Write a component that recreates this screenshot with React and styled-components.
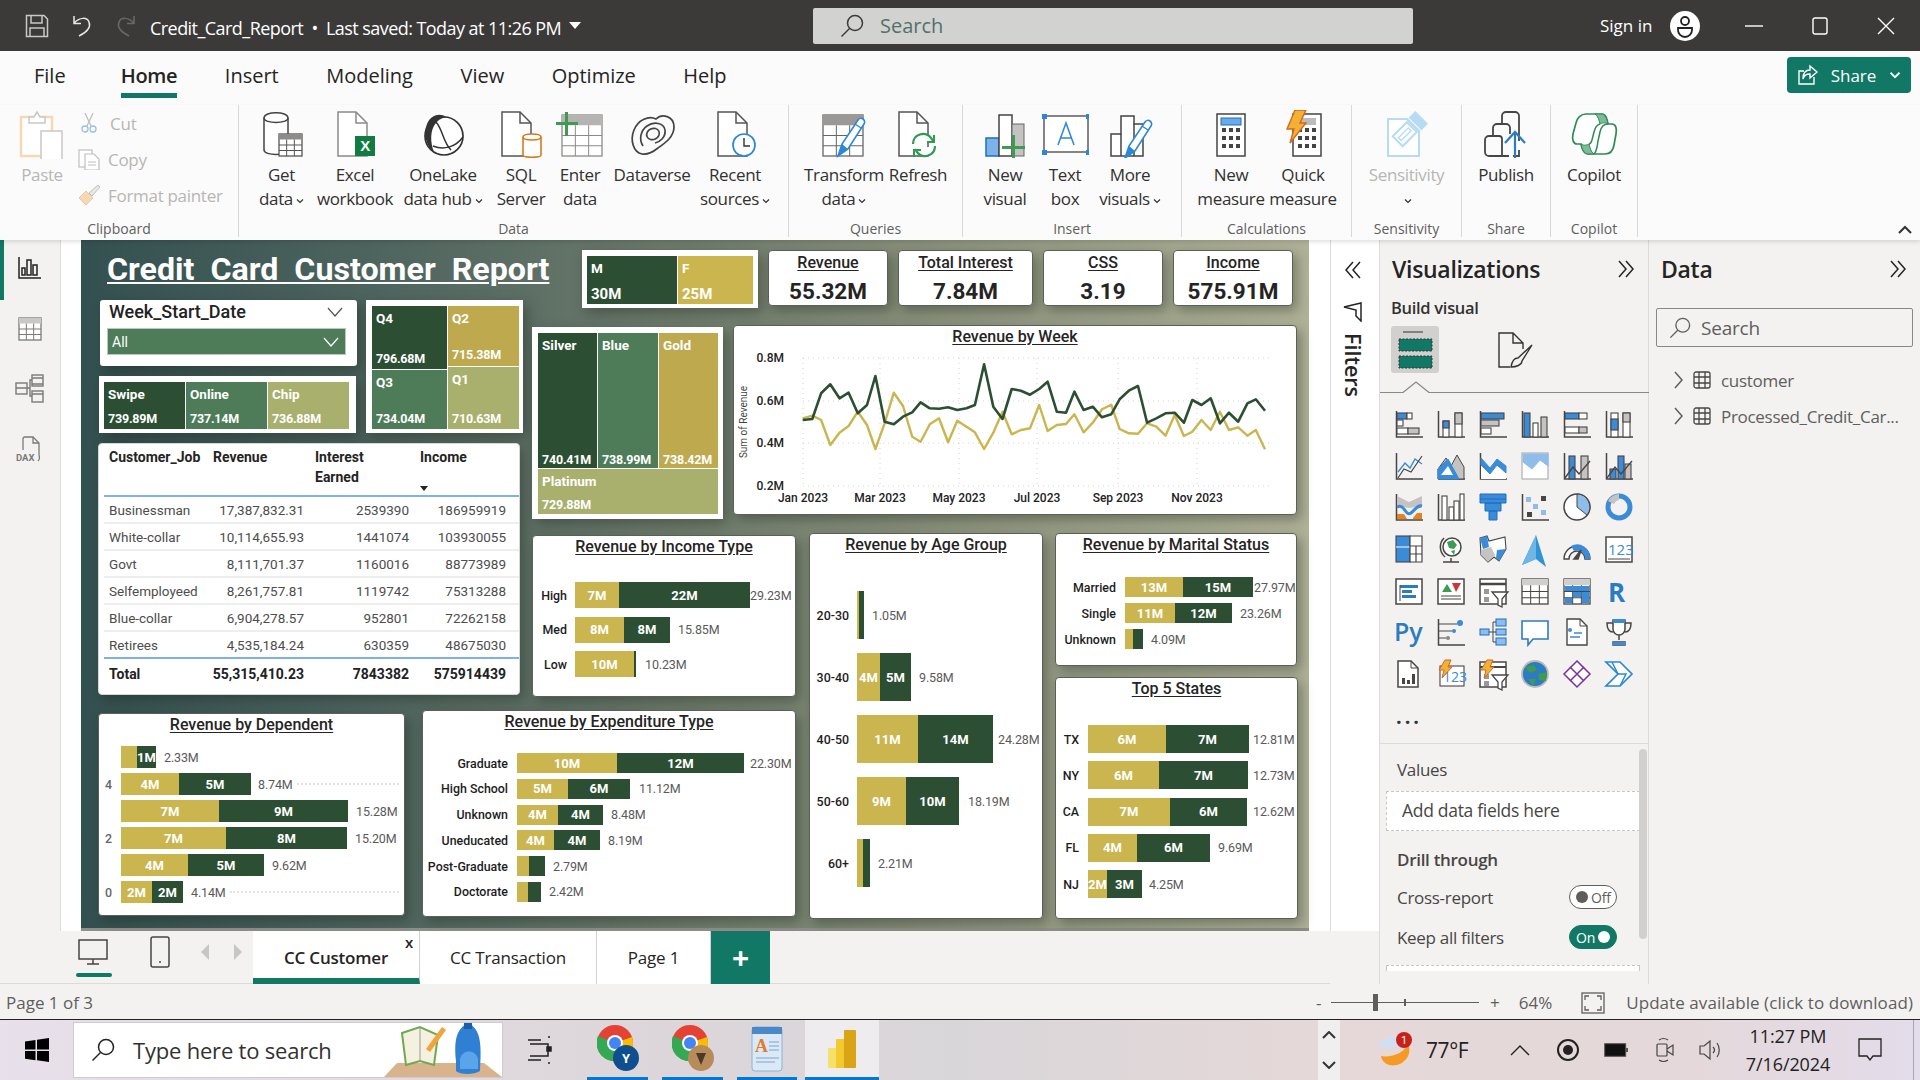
import React from 'react';
import styled, { createGlobalStyle } from 'styled-components';

const GOLD = '#cbb54f';
const DARK = '#2c4f34';
const MID = '#4e7c59';
const KHAKI = '#a9b06e';
const TEAL = '#117865';
const INK = '#484644';
const BLUE = '#3a8bd8';
const SKY = '#8ebdeb';
const GREY = '#c4c3c1';

const GlobalStyle = createGlobalStyle`
  html, body {
    margin: 0;
    width: 1920px;
    height: 1080px;
    overflow: hidden;
    font-family: 'Open Sans', 'Noto Sans', sans-serif;
    color: #252423;
  }
  * { box-sizing: border-box; }
`;

const Page = styled.div`
  width: 1920px;
  height: 1080px;
  display: flex;
  flex-direction: column;
  background: #f3f2f1;
`;

/* title bar */
const TitleBar = styled.div`
  height: 51px;
  flex: none;
  background: #3b3a39;
  display: flex;
  align-items: center;
  color: #fff;
  padding-left: 25px;
`;
const BarIcons = styled.div`
  display: flex;
  align-items: center;
  gap: 22px;
  width: 125px;
`;
const DocTitle = styled.div`
  font-size: 18px;
  width: 419px;
  padding-top: 5px;
  white-space: pre;
  letter-spacing: -0.55px;
`;
const Caret = styled.span`
  width: 0;
  height: 0;
  border-left: 6px solid transparent;
  border-right: 6px solid transparent;
  border-top: 7px solid #fff;
  margin-right: 232px;
`;
const TopSearch = styled.div`
  width: 600px;
  height: 36px;
  background: #d2d2d0;
  border-radius: 2px;
  display: flex;
  align-items: center;
  gap: 16px;
  padding-left: 27px;
  color: #55706a;
  font-size: 20px;
`;
const SignIn = styled.div`
  margin-left: 187px;
  font-size: 17px;
  width: 70px;
`;
const WinControls = styled.div`
  display: flex;
  align-items: center;
  gap: 49px;
  margin-left: 45px;
`;

/* menu */
const MenuBar = styled.div`
  height: 54px;
  flex: none;
  background: #fbfbfb;
  display: flex;
  align-items: flex-start;
  padding: 0 9px 0 34px;
  gap: 47.5px;
`;
const MenuItem = styled.div`
  height: 47px;
  line-height: 49px;
  font-size: 20px;
  font-weight: ${(p) => (p.$on ? 600 : 400)};
  letter-spacing: ${(p) => (p.$on ? -0.3 : 0)}px;
  border-bottom: ${(p) => (p.$on ? `5px solid ${TEAL}` : 'none')};
  margin-right: ${(p) => p.$mr || 0}px;
`;
const ShareButton = styled.div`
  margin-left: auto;
  margin-top: 6px;
  width: 124px;
  height: 36px;
  background: ${TEAL};
  color: #fff;
  border-radius: 4px;
  display: flex;
  align-items: center;
  justify-content: center;
  gap: 10px;
  font-size: 17px;
`;

/* ribbon */
const Ribbon = styled.div`
  height: 135px;
  flex: none;
  background: #fbfbfb;
  display: flex;
  position: relative;
  box-shadow: 0 2px 4px rgba(0, 0, 0, 0.12);
  z-index: 2;
`;
const RibbonGroup = styled.div`
  width: ${(p) => p.$w}px;
  height: 132px;
  border-right: 1px solid #d9d8d6;
  display: flex;
  flex-direction: column;
`;
const GroupBody = styled.div`
  height: 117px;
  display: flex;
  padding-left: ${(p) => p.$pl || 0}px;
`;
const GroupName = styled.div`
  text-align: center;
  font-size: 14px;
  line-height: 16px;
  color: #605e5c;
`;
const RibbonBtn = styled.div`
  width: ${(p) => p.$w}px;
  flex: none;
  display: flex;
  flex-direction: column;
  align-items: center;
  padding-left: ${(p) => p.$pl || 0}px;
  color: ${(p) => (p.$off ? '#b8b6b4' : '#323130')};
  font-size: 17px;
  letter-spacing: -0.35px;
  line-height: 24px;
  text-align: center;
  white-space: nowrap;
`;
const BtnIcon = styled.div`
  height: 59px;
  margin-top: -1px;
  display: flex;
  align-items: center;
  justify-content: center;
`;
const SmallCol = styled.div`
  display: flex;
  flex-direction: column;
`;
const SmallBtn = styled.div`
  height: 36px;
  display: flex;
  align-items: center;
  gap: 6px;
  color: #b8b6b4;
  font-size: 17px;
  letter-spacing: -0.3px;
  white-space: nowrap;
`;
const Collapse = styled.div`
  position: absolute;
  right: 8px;
  bottom: 5px;
  line-height: 0;
`;

/* main */
const Main = styled.div`
  flex: 1;
  display: flex;
  min-height: 0;
`;
const Workspace = styled.div`
  width: 1330px;
  flex: none;
  display: flex;
  flex-direction: column;
`;
const CanvasRow = styled.div`
  height: 691px;
  display: flex;
  background: #fff;
`;
const Rail = styled.div`
  width: 61px;
  flex: none;
  background: #f3f2f1;
  border-right: 1px solid #dddbd9;
  display: flex;
  flex-direction: column;
  align-items: center;
  position: relative;
`;
const RailSlot = styled.div`
  height: 60.5px;
  flex: none;
  display: flex;
  align-items: center;
  justify-content: center;
  padding-bottom: 4px;
`;
const RailMark = styled.div`
  position: absolute;
  left: 0;
  top: 0;
  width: 4px;
  height: 60px;
  background: ${TEAL};
`;
const Canvas = styled.div`
  margin-left: 20px;
  width: 1228px;
  height: 691px;
  padding-left: 17px;
  border-bottom: 3px solid #8e8f8a;
  background: linear-gradient(90deg, #335050 0%, #4f655f 25%, #6f7c6c 50%, #8a917b 70%, #b0b297 100%);
  display: grid;
  grid-template-columns: 430px 274px 498px;
  grid-template-rows: 288px 175px 225px;
  grid-template-areas:
    'head top top'
    'head inc side'
    'low low side';
`;
const HeadArea = styled.div`
  grid-area: head;
  display: flex;
  flex-direction: column;
`;
const TopArea = styled.div`
  grid-area: top;
  display: flex;
  flex-direction: column;
  padding-top: 10px;
`;
const IncomeArea = styled.div`
  grid-area: inc;
  padding: 7px 0 0 4px;
`;
const LowArea = styled.div`
  grid-area: low;
  display: flex;
  align-items: flex-start;
  gap: 17px;
`;
const SideArea = styled.div`
  grid-area: side;
  display: flex;
  align-items: flex-start;
  gap: 12px;
  padding-left: 7px;
`;
const SideCol = styled.div`
  display: flex;
  flex-direction: column;
  gap: 11px;
  padding-top: 5px;
`;

const ReportTitle = styled.div`
  height: 60px;
  padding: 11px 0 0 9px;
  font-family: Roboto, 'Liberation Sans', sans-serif;
  font-size: 32.2px;
  line-height: 36px;
  font-weight: 700;
  color: #fff;
  white-space: pre;
  text-decoration: underline;
  text-decoration-thickness: 2px;
  text-underline-offset: 2px;
`;
const FiltersRow = styled.div`
  display: flex;
  gap: 9px;
`;
const FiltersCol = styled.div`
  display: flex;
  flex-direction: column;
  gap: 10px;
`;
const Panel = styled.div`
  font-family: Roboto, 'Liberation Sans', sans-serif;
  background: #fff;
  width: ${(p) => p.$w}px;
  height: ${(p) => p.$h}px;
  margin-left: ${(p) => p.$ml || 0}px;
  margin-top: ${(p) => p.$mt || 0}px;
  flex: none;
  box-shadow: 4px 5px 12px rgba(20, 30, 20, 0.35);
`;
const Card = styled(Panel)`
  border: 1px solid #5a5f58;
  border-radius: 4px;
`;
const FramePanel = styled(Panel)`
  padding: ${(p) => p.$pad || '6px'};
  display: flex;
  gap: 1px;
`;
const Slicer = styled(Panel)`
  border-radius: 3px;
  padding: 0 11px 0 7px;
`;
const SlicerHead = styled.div`
  height: 28px;
  display: flex;
  align-items: center;
  justify-content: space-between;
  padding: 0 3px 5px 2px;
  font-size: 18px;
  font-weight: 500;
  color: #222;
`;
const SlicerDrop = styled.div`
  height: 27px;
  background: ${MID};
  border: 1px solid #b9c9bd;
  color: #fff;
  font-size: 14px;
  display: flex;
  align-items: center;
  justify-content: space-between;
  padding: 0 6px 0 4px;
`;
const TileCol = styled.div`
  display: flex;
  flex-direction: column;
  gap: 1px;
`;
const TileLine = styled.div`
  display: flex;
  gap: 1px;
`;
const Tile = styled.div`
  width: ${(p) => p.$w}px;
  height: ${(p) => p.$h}px;
  background: ${(p) => p.$c};
  color: #fff;
  display: flex;
  flex-direction: column;
  justify-content: space-between;
  padding: 4px 4px ${(p) => p.$pb ?? 2}px;
  font-size: 13.5px;
  font-weight: 700;
  line-height: 16px;
  white-space: nowrap;
`;
const TileValue = styled.div`
  font-size: 12.5px;
  font-weight: 700;
  letter-spacing: -0.2px;
`;
const LargeValue = styled.div`
  font-size: 15px;
  font-weight: 700;
`;

/* table */
const Table = styled(Card)`
  margin-top: 10px;
  padding: 0 0 0 5px;
  border-color: #d7d7d7;
`;
const TableGrid = styled.div`
  display: grid;
  grid-template-columns: 105px 100px 105px 97px;
  height: ${(p) => p.$h}px;
  align-items: ${(p) => (p.$head ? 'start' : 'center')};
  border-bottom: ${(p) => p.$line || 'none'};
  font-size: ${(p) => (p.$strong ? '14px' : '13.5px')};
  font-weight: ${(p) => (p.$strong ? 700 : 400)};
  color: ${(p) => (p.$strong ? '#222' : '#4d4d4d')};
`;
const HeadCell = styled.div`
  position: relative;
  font-weight: 700;
  color: #252423;
  font-size: 14px;
  line-height: 20px;
  padding: 3px 0 0 ${(p) => p.$pl}px;
  white-space: nowrap;
`;
const SortMark = styled.span`
  position: absolute;
  left: 6px;
  top: 42px;
  width: 0;
  height: 0;
  border-left: 4px solid transparent;
  border-right: 4px solid transparent;
  border-top: 5px solid #252423;
`;
const NameCell = styled.div`
  padding-left: 5px;
  white-space: nowrap;
`;
const NumCell = styled.div`
  text-align: right;
  padding-right: 5px;
  white-space: nowrap;
`;

/* KPI */
const KpiRow = styled.div`
  display: flex;
  gap: 10px;
  padding-left: 54px;
`;
const Kpi = styled(Card)`
  text-align: center;
  color: #252423;
`;
const KpiName = styled.div`
  font-size: 16px;
  line-height: 20px;
  margin-top: 2px;
  font-weight: 500;
  text-decoration: underline;
  text-underline-offset: 2px;
`;
const KpiValue = styled.div`
  font-size: 22.5px;
  line-height: 30px;
  margin-top: 3px;
  font-weight: 700;
`;
const ChartsRow = styled.div`
  display: flex;
  gap: 10px;
  padding-left: 4px;
  margin-top: 17px;
  align-items: flex-start;
`;

/* bar charts */
const ChartTitle = styled.div`
  height: 22px;
  line-height: 22px;
  text-align: center;
  font-size: 16px;
  font-weight: 500;
  color: #252423;
  text-decoration: underline;
  text-underline-offset: 2px;
  white-space: nowrap;
`;
const BarList = styled.div`
  margin-top: ${(p) => p.$top}px;
  display: flex;
  flex-direction: column;
  gap: ${(p) => p.$gap}px;
`;
const BarRow = styled.div`
  display: flex;
  align-items: center;
  height: ${(p) => p.$h}px;
`;
const BarCat = styled.div`
  flex: none;
  width: ${(p) => p.$w}px;
  padding-right: ${(p) => p.$pad}px;
  text-align: right;
  font-size: 12.4px;
  font-weight: 500;
  color: ${(p) => (p.$soft ? '#666' : '#1d1d1d')};
  white-space: nowrap;
`;
const Seg = styled.div`
  flex: none;
  height: 100%;
  background: ${(p) => p.$c};
  color: #fff;
  font-size: 13px;
  font-weight: 700;
  display: flex;
  align-items: center;
  justify-content: center;
  overflow: hidden;
`;
const BarTotal = styled.div`
  flex: none;
  font-size: 12.5px;
  letter-spacing: -0.15px;
  color: #5a5a5a;
  white-space: nowrap;
`;
const BarDots = styled.div`
  flex: 1;
  margin: 0 5px 0 4px;
  border-top: 2px dotted #e2e2e2;
`;

/* filters pane */
const FilterPane = styled.div`
  width: 49px;
  flex: none;
  height: 691px;
  background: #fff;
  border-left: 1px solid #dcdbd9;
  display: flex;
  flex-direction: column;
  align-items: center;
  padding: 20px 4px 0 0;
`;
const FilterLabel = styled.div`
  writing-mode: vertical-rl;
  font-size: 21.5px;
  line-height: 24px;
  font-weight: 600;
  margin-top: 11px;
  color: #252423;
`;

/* tabs */
const TabBar = styled.div`
  height: 53px;
  display: flex;
  border-bottom: 1px solid #dcdbd9;
  background: #f3f2f1;
`;
const TabTools = styled.div`
  width: 253px;
  flex: none;
  display: flex;
  align-items: flex-start;
  padding: 4px 0 0 60px;
  position: relative;
`;
const ToolMark = styled.div`
  position: absolute;
  left: 76px;
  top: 42px;
  width: 36px;
  height: 4px;
  border-radius: 2px;
  background: ${TEAL};
`;
const ToolSlot = styled.div`
  width: ${(p) => p.$w}px;
  flex: none;
  height: 34px;
  display: flex;
  align-items: center;
  justify-content: center;
`;
const Tab = styled.div`
  width: ${(p) => p.$w}px;
  height: 53px;
  background: #fff;
  border-right: 1px solid #d3d2d0;
  border-bottom: ${(p) => (p.$on ? `6px solid ${TEAL}` : 'none')};
  font-size: 17px;
  letter-spacing: -0.2px;
  font-weight: ${(p) => (p.$on ? 600 : 400)};
  display: flex;
  align-items: center;
  justify-content: center;
  padding-top: ${(p) => (p.$on ? 6 : 0)}px;
  position: relative;
`;
const TabClose = styled.span`
  position: absolute;
  right: 6px;
  top: 0;
  font-size: 15px;
  line-height: 22px;
  font-weight: 600;
`;
const AddTab = styled.div`
  width: 59px;
  height: 53px;
  background: ${TEAL};
  color: #fff;
  font-size: 30px;
  font-weight: 700;
  display: flex;
  align-items: center;
  justify-content: center;
`;

/* visualizations pane */
const VizPane = styled.div`
  width: 270px;
  flex: none;
  border-left: 1px solid #dcdbd9;
  border-right: 1px solid #dcdbd9;
  position: relative;
  background: #f3f2f1;
`;
const PaneHead = styled.div`
  height: 56px;
  padding: 2px 13px 0 12px;
  display: flex;
  align-items: center;
  justify-content: space-between;
  font-size: 23px;
  font-weight: 600;
  letter-spacing: -0.3px;
  color: #252423;
`;
const BuildLabel = styled.div`
  height: 24px;
  line-height: 24px;
  padding-left: 11px;
  font-size: 16.5px;
  font-weight: 600;
  letter-spacing: -0.3px;
  color: #323130;
`;
const BuildTabs = styled.div`
  display: flex;
  padding: 6px 0 0 11px;
  height: 53px;
  gap: 52px;
  align-items: flex-start;
`;
const BuildTile = styled.div`
  width: 48px;
  height: 47px;
  border-radius: 3px;
  background: ${(p) => (p.$on ? '#d2d0ce' : 'transparent')};
  display: flex;
  align-items: center;
  justify-content: center;
`;
const Notch = styled.svg`
  display: block;
  width: 269px;
  height: 20px;
`;
const VizGrid = styled.div`
  display: grid;
  grid-template-columns: repeat(6, 42px);
  grid-auto-rows: 41.7px;
  padding: 11px 0 0 8px;
  height: 350px;
  align-items: center;
  justify-items: center;
`;
const VizDots = styled.div`
  grid-column: 1;
  letter-spacing: 3px;
  font-size: 20px;
  font-weight: 700;
  line-height: 10px;
  color: #333;
`;
const WellArea = styled.div`
  border-top: 1px solid #dcdbd9;
  padding: 14px 0 0 6px;
`;
const WellLabel = styled.div`
  padding-left: 11px;
  font-size: 17px;
  line-height: 24px;
  letter-spacing: -0.3px;
  color: #484644;
  font-weight: ${(p) => (p.$b ? 600 : 400)};
  margin-top: ${(p) => p.$mt || 0}px;
`;
const DropWell = styled.div`
  margin-top: ${(p) => p.$mt || 9}px;
  width: 254px;
  height: ${(p) => p.$h || 40}px;
  background: #fff;
  border: 1px dashed #c8c6c4;
  border-bottom: ${(p) => (p.$cut ? 'none' : '1px dashed #c8c6c4')};
  padding-left: 15px;
  line-height: 36px;
  font-size: 17.5px;
  letter-spacing: -0.3px;
  color: #484644;
`;
const ToggleRow = styled.div`
  width: 231px;
  margin-top: ${(p) => p.$mt}px;
  padding-left: 11px;
  display: flex;
  align-items: center;
  justify-content: space-between;
  font-size: 17px;
  letter-spacing: -0.3px;
  color: #484644;
`;
const Toggle = styled.div`
  width: 48px;
  height: 24px;
  border-radius: 12px;
  display: flex;
  align-items: center;
  gap: 3px;
  padding: 0 6px;
  background: ${(p) => (p.$on ? TEAL : '#fff')};
  border: 1px solid ${(p) => (p.$on ? TEAL : '#605e5c')};
  color: ${(p) => (p.$on ? '#fff' : '#605e5c')};
  font-size: 14px;
  letter-spacing: -0.2px;
`;
const Knob = styled.span`
  width: 12px;
  height: 12px;
  border-radius: 50%;
  flex: none;
  background: ${(p) => (p.$on ? '#fff' : '#605e5c')};
`;
const ScrollThumb = styled.div`
  position: absolute;
  right: 1px;
  top: 509px;
  width: 8px;
  height: 190px;
  border-radius: 4px;
  background: #d2d0ce;
`;

/* data pane */
const DataPane = styled.div`
  flex: 1;
  background: #f3f2f1;
`;
const DataSearch = styled.div`
  margin: 12px 0 0 7px;
  width: 257px;
  height: 39px;
  border: 1px solid #8a8886;
  border-radius: 2px;
  display: flex;
  align-items: center;
  gap: 10px;
  padding-left: 12px;
  font-size: 19px;
  letter-spacing: -0.2px;
  color: #605e5c;
`;
const FieldList = styled.div`
  margin-top: 15px;
`;
const FieldRow = styled.div`
  height: 36px;
  display: flex;
  align-items: center;
  padding-left: 24px;
  gap: 10px;
  font-size: 17px;
  letter-spacing: -0.3px;
  color: #605e5c;
  white-space: nowrap;
`;

/* status + taskbar */
const StatusBar = styled.div`
  height: 36px;
  flex: none;
  display: flex;
  align-items: center;
  padding: 2px 0 0 6px;
  background: #f3f2f1;
  border-bottom: 1px solid #222;
  font-size: 17px;
  color: #605e5c;
`;
const ZoomGroup = styled.div`
  margin-left: auto;
  display: flex;
  align-items: center;
`;
const ZoomTrack = styled.div`
  position: relative;
  width: 148px;
  height: 1px;
  background: #605e5c;
  margin: 0 11px 0 9.5px;
`;
const ZoomThumb = styled.div`
  position: absolute;
  left: ${(p) => p.$x}px;
  top: ${(p) => (p.$tall ? -8 : -3)}px;
  width: ${(p) => (p.$tall ? 5 : 2)}px;
  height: ${(p) => (p.$tall ? 17 : 7)}px;
  background: #605e5c;
`;
const PercentText = styled.span`
  margin-left: 19px;
`;
const FitIcon = styled.svg`
  margin-left: 29px;
`;
const UpdateText = styled.div`
  margin: 0 7px 0 21px;
  letter-spacing: 0.07px;
`;
const Taskbar = styled.div`
  height: 60px;
  flex: none;
  display: flex;
  align-items: center;
  background: linear-gradient(90deg, #e8e0ea 0%, #dcd6da 35%, #d9d6d9 50%, #e6d8d8 70%, #e4d8da 88%, #e3dcea 100%);
`;
const StartSlot = styled.div`
  width: 73px;
  flex: none;
  display: flex;
  justify-content: center;
`;
const TaskSearch = styled.div`
  width: 430px;
  flex: none;
  height: 56px;
  background: #fff;
  display: flex;
  align-items: center;
  gap: 18px;
  padding-left: 17px;
  font-size: 22px;
  letter-spacing: -0.2px;
  color: #323130;
  border: 1px solid #cfcccf;
  position: relative;
  overflow: hidden;
`;
const SearchArt = styled.div`
  position: absolute;
  right: 0;
  bottom: 0;
  line-height: 0;
`;
const TaskIcons = styled.div`
  display: flex;
  flex: none;
  margin-left: 7px;
  height: 60px;
  align-items: stretch;
`;
const TaskSlot = styled.div`
  width: ${(p) => p.$w}px;
  flex: none;
  margin-left: ${(p) => p.$ml || 0}px;
  display: flex;
  align-items: center;
  justify-content: center;
  background: ${(p) => (p.$hot ? 'rgba(255,255,255,0.55)' : 'transparent')};
  border-bottom: ${(p) => (p.$run ? '3px solid #0078d4' : 'none')};
`;
const TrayScroll = styled.div`
  margin-left: 439px;
  width: 22px;
  flex: none;
  height: 60px;
  background: #f0eeee;
  display: flex;
  flex-direction: column;
  align-items: center;
  justify-content: space-between;
  padding: 11px 0;
`;
const Tray = styled.div`
  display: flex;
  flex: none;
  align-items: center;
  height: 60px;
  padding-left: 38px;
  color: #222;
`;
const Temp = styled.div`
  font-size: 21px;
  margin-left: 12px;
  width: 79px;
  letter-spacing: -0.4px;
`;
const TrayIcon = styled.div`
  width: ${(p) => p.$w}px;
  flex: none;
  display: flex;
  justify-content: center;
`;
const ClockBox = styled.div`
  width: 120px;
  flex: none;
  margin-left: 5px;
  text-align: center;
  font-size: 18px;
  line-height: 28px;
  letter-spacing: -0.1px;
`;
const TrayEnd = styled.div`
  width: 1px;
  flex: none;
  height: 60px;
  margin-left: 21px;
  background: #a9a6ad;
`;

/* ---------- drawn icons ---------- */

const Ic = ({ s = 48, w, h, children }) => (
  <svg width={w || s} height={h || s} viewBox={`0 0 ${w || s} ${h || s}`} fill="none">
    {children}
  </svg>
);

const Doc = ({ c = '#4a4a48', x = 0, w = 30, h = 44, y = 2 }) => (
  <>
    <path d={`M${x + 1} ${y}H${x + w - 11}L${x + w} ${y + 11}V${y + h}H${x + 1}Z`} fill="#fff" stroke={c} strokeWidth="1.5" />
    <path d={`M${x + w - 11} ${y}V${y + 11}H${x + w}`} stroke={c} strokeWidth="1.5" />
  </>
);

const GridTable = ({ x, y, w, h, rows = 3, cols = 3, c = '#6a6a68', head = '#a8a7a5' }) => (
  <>
    <rect x={x} y={y} width={w} height={h} fill="#fff" stroke={c} strokeWidth="1.3" />
    <rect x={x} y={y} width={w} height={h / (rows + 1)} fill={head} />
    {Array.from({ length: rows - 1 }, (_, i) => (
      <path key={i} d={`M${x} ${y + ((i + 2) * h) / (rows + 1)}H${x + w}`} stroke={c} />
    ))}
    {Array.from({ length: cols - 1 }, (_, i) => (
      <path key={i} d={`M${x + ((i + 1) * w) / cols} ${y + h / (rows + 1)}V${y + h}`} stroke={c} />
    ))}
  </>
);

const Pencil = ({ x = 0, y = 0 }) => (
  <g transform={`translate(${x} ${y})`}>
    <path d="M2 40L6 28 22 4a3 3 0 0 1 6 4L12 33Z" fill="#fff" stroke="#2b88d8" strokeWidth="1.6" />
    <path d="M2 40L6 28 12 33Z" fill="#2b88d8" />
    <path d="M19 8l6 4" stroke="#2b88d8" strokeWidth="1.4" />
  </g>
);

const Chevron = ({ c = '#323130', s = 8 }) => (
  <svg width={s} height={s} viewBox="0 0 8 8" fill="none" style={{ marginLeft: 3 }}>
    <path d="M1 2.5L4 5.5 7 2.5" stroke={c} strokeWidth="1.2" />
  </svg>
);

const GetDataIcon = () => (
  <Ic>
    <path d="M6 8c0-7 24-7 24 0v32c0 6-24 6-24 0Z" fill="#fff" stroke="#444" strokeWidth="1.5" />
    <path d="M6 8c0 6 24 6 24 0" stroke="#444" strokeWidth="1.5" />
    <GridTable x={21} y={24} w={23} h={22} c="#555" head="#8d8c8a" />
  </Ic>
);
const ExcelIcon = () => (
  <Ic>
    <Doc c="#8a8a88" x={6} />
    <rect x="24" y="26" width="20" height="20" fill="#107c41" />
    <text x="34" y="41" fill="#fff" fontSize="15" fontWeight="700" textAnchor="middle" fontFamily="Liberation Sans">X</text>
  </Ic>
);
const OneLakeIcon = () => (
  <Ic>
    <circle cx="25" cy="26" r="19" fill="#fff" stroke="#333" strokeWidth="1.7" />
    <path d="M27 7C22 3 12 4 8 14 4 24 7 36 15 42 11 32 11 20 17 13 20 9 24 8 27 7Z" fill="#333" />
    <path d="M17 12C24 20 24 32 32 40M14 36C24 40 36 38 44 27" stroke="#333" strokeWidth="1.5" />
  </Ic>
);
const SqlIcon = () => (
  <Ic>
    <Doc c="#555" x={4} />
    <path d="M26 27c0-4 18-4 18 0v18c0 3-18 3-18 0Z" fill="#fff" stroke="#d97a1f" strokeWidth="1.6" />
    <path d="M26 27c0 4 18 4 18 0" stroke="#d97a1f" strokeWidth="1.6" />
  </Ic>
);
const EnterIcon = () => (
  <Ic>
    <GridTable x={6} y={5} w={40} h={41} head="#b5b4b2" c="#8a8a88" />
    <rect x="0" y="12" width="22" height="3" fill="#3f9a54" />
    <rect x="9" y="2" width="3" height="24" fill="#3f9a54" />
  </Ic>
);
const DataverseIcon = () => (
  <Ic>
    <path d="M14 44C5 42 2 30 6 20 10 10 21 5 28 9 34 3 46 6 46 17 46 27 37 33 30 38 25 42 20 45 14 44Z" stroke="#444" strokeWidth="1.7" />
    <path d="M15 36C11 30 12 21 19 16 26 11 36 13 37 20 38 27 32 32 27 33" stroke="#444" strokeWidth="1.7" />
    <ellipse cx="25" cy="24" rx="6.5" ry="5.5" transform="rotate(-25 25 24)" stroke="#444" strokeWidth="1.7" />
  </Ic>
);
const RecentIcon = () => (
  <Ic>
    <Doc c="#555" x={6} />
    <circle cx="33" cy="35" r="11" fill="#fff" stroke="#2b88d8" strokeWidth="1.7" />
    <path d="M33 28v8h6" stroke="#333" strokeWidth="1.4" />
  </Ic>
);
const TransformIcon = () => (
  <Ic>
    <GridTable x={3} y={5} w={40} h={41} c="#666" head="#9a9998" />
    <Pencil x={16} y={6} />
  </Ic>
);
const RefreshIcon = () => (
  <Ic>
    <Doc c="#555" x={4} />
    <path d="M19 34a10 10 0 0 1 18-6l2 3M41 36a10 10 0 0 1-18 6l-2-3" stroke="#2e9b53" strokeWidth="2.2" fill="#fff" />
    <path d="M40 25v7h-7M20 47v-7h7" stroke="#2e9b53" strokeWidth="2" />
  </Ic>
);
const NewVisualIcon = () => (
  <Ic>
    <rect x="5" y="28" width="13" height="18" fill="#7cb3e8" stroke="#1f6fc0" strokeWidth="1.5" />
    <rect x="18" y="5" width="13" height="41" fill="#fff" stroke="#444" strokeWidth="1.5" />
    <rect x="31" y="14" width="12" height="32" fill="#c4c3c1" stroke="#666" />
    <rect x="21" y="36" width="23" height="3" fill="#3f9a54" />
    <rect x="31" y="25" width="3" height="23" fill="#3f9a54" />
  </Ic>
);
const TextBoxIcon = () => (
  <Ic>
    <rect x="3" y="6" width="44" height="36" fill="#fff" stroke="#444" strokeWidth="1.3" />
    {[[1, 4], [45, 4], [1, 40], [45, 40]].map(([x, y]) => (
      <rect key={x + '-' + y} x={x} y={y} width="5" height="5" fill="#2b88d8" />
    ))}
    <path d="M17 35L25 13 33 35M20 28H30" stroke="#2b88d8" strokeWidth="1.5" />
  </Ic>
);
const MoreVisualsIcon = () => (
  <Ic>
    <path d="M5 46V24H15V6H28V14H37V46Z" fill="#fff" stroke="#444" strokeWidth="1.5" />
    <path d="M15 24V46M28 14V46" stroke="#444" strokeWidth="1.5" />
    <Pencil x={17} y={8} />
  </Ic>
);
const Calc = ({ x = 8 }) => (
  <>
    <rect x={x} y="4" width="28" height="42" fill="#fff" stroke="#444" strokeWidth="1.5" />
    {[18, 26, 34].map((y) =>
      [x + 5, x + 12, x + 19].map((cx) => <rect key={`${y}-${cx}`} x={cx} y={y} width="4" height="4" fill="#444" />)
    )}
  </>
);
const NewMeasureIcon = () => (
  <Ic>
    <Calc x={10} />
    <rect x="14" y="8" width="20" height="7" fill="#6aaae6" stroke="#1f6fc0" />
  </Ic>
);
const QuickMeasureIcon = () => (
  <Ic>
    <Calc x={14} />
    <rect x="20" y="8" width="17" height="7" fill="#bdbcba" />
    <path d="M16 0H27L21 13H27L11 33 15 19H8Z" fill="#f2b035" stroke="#d2691e" strokeWidth="1.4" />
  </Ic>
);
const SensitivityIcon = () => (
  <Ic>
    <rect x="5" y="9" width="31" height="37" fill="#fff" stroke="#b7dcf2" strokeWidth="2" />
    <g transform="rotate(-45 26 20)">
      <rect x="10" y="13" width="20" height="14" fill="#fff" stroke="#b7dcf2" strokeWidth="2" />
      <rect x="13" y="18" width="14" height="4" fill="#fff" stroke="#b7dcf2" strokeWidth="1.4" />
      <rect x="31" y="11" width="13" height="18" fill="#b7dcf2" />
      <path d="M34 11V29" stroke="#fff" />
    </g>
  </Ic>
);
const PublishIcon = () => (
  <Ic>
    <path d="M27 46H7A4 4 0 0 1 3 42V30A4 4 0 0 1 7 26H17A3 3 0 0 1 20 29V46" stroke="#484644" strokeWidth="1.8" />
    <path d="M11 26V18A4 4 0 0 1 15 14H24A4 4 0 0 1 28 18V24" stroke="#484644" strokeWidth="1.8" />
    <path d="M20 14V6A4 4 0 0 1 24 2H33A4 4 0 0 1 37 6V31M37 40V46H31" stroke="#484644" strokeWidth="1.8" />
    <path d="M33 48V22M23 33L33 22 43 33" stroke="#2b7cc0" strokeWidth="2.2" />
  </Ic>
);
const CopilotIcon = () => (
  <Ic>
    <path d="M16 4H32C36 4 37 9 38 14H42C46 14 47 19 46 24L44 35C43 41 40 44 35 44H18C14 44 12 39 11 34H7C3 34 2 29 3 24L6 13C7 8 11 4 16 4Z" fill="#fff" stroke="#2e8b57" strokeWidth="1.7" />
    <path d="M25 4H32C35 4 37 9 38 14 35 12 32 13 30 14 29 10 28 6 25 4Z" fill="#7dbb92" stroke="#2e8b57" />
    <path d="M11 34C14 36 17 35 19 34 20 38 21 42 24 44H18C14 44 12 39 11 34Z" fill="#7dbb92" stroke="#2e8b57" />
    <path d="M30 14C26 15 25 18 24 22L22 30C21 33 20 34 19 34M38 14C34 14 31 17 30 22L28 31C27 37 27 41 24 44" stroke="#2e8b57" strokeWidth="1.5" />
  </Ic>
);
const PasteIcon = () => (
  <Ic s={50}>
    <rect x="4" y="8" width="31" height="39" fill="#fff" stroke="#f6d9b4" strokeWidth="2.5" />
    <path d="M12 8h5l3-5 3 5h5v6H12Z" fill="#fff" stroke="#c9c8c6" strokeWidth="1.5" />
    <rect x="24" y="22" width="21" height="30" fill="#fff" stroke="#c9c8c6" strokeWidth="1.5" />
  </Ic>
);
const CutIcon = () => (
  <Ic s={22}>
    <path d="M7 1L13 14M15 1L9 14" stroke="#c0bfbd" strokeWidth="1.3" />
    <circle cx="7" cy="17" r="3" stroke="#9dbfe0" strokeWidth="1.3" />
    <circle cx="15" cy="17" r="3" stroke="#9dbfe0" strokeWidth="1.3" />
  </Ic>
);
const CopyIcon = () => (
  <Ic s={22} w={24}>
    <rect x="1" y="2" width="13" height="17" fill="#fff" stroke="#c0bfbd" strokeWidth="1.2" />
    <path d="M7 6h9l5 5v11H7Z" fill="#fff" stroke="#c0bfbd" strokeWidth="1.2" />
    <path d="M10 14h8M10 17h8" stroke="#c0bfbd" />
  </Ic>
);
const PainterIcon = () => (
  <Ic s={22} w={24}>
    <path d="M1 14l7-7 7 7-7 7Z" fill="#f6d9b4" stroke="#e8c9a0" />
    <path d="M11 9l9-8 2 2-8 9Z" fill="#e8e8e8" stroke="#c0bfbd" />
  </Ic>
);

const SaveIcon = () => (
  <svg width="24" height="24" viewBox="0 0 24 24" fill="none" stroke="#c8c8c6" strokeWidth="1.5">
    <path d="M1.5 1.5H19L22.5 5V22.5H1.5Z" />
    <path d="M6 1.5V9H17V1.5M5 22.5V14H19V22.5" />
  </svg>
);
const UndoIcon = ({ dim, flip }) => (
  <svg width="22" height="24" viewBox="0 0 22 24" fill="none" stroke={dim ? '#6a6968' : '#e8e8e6'} strokeWidth="1.5" style={{ transform: flip ? 'scaleX(-1)' : 'none' }}>
    <path d="M8 22C16 18 20 13 18 8 16 3 9 3 3 9M3 2V9.5H10" />
  </svg>
);
const Magnifier = ({ s = 24, c = '#3b3a39' }) => (
  <svg width={s} height={s} viewBox="0 0 24 24" fill="none" stroke={c} strokeWidth="1.5">
    <circle cx="15" cy="9" r="7.5" />
    <path d="M9.5 14.5L1.5 22.5" />
  </svg>
);
const Avatar = () => (
  <svg width="30" height="30" viewBox="0 0 30 30" fill="none">
    <circle cx="15" cy="15" r="15" fill="#fff" />
    <circle cx="15" cy="10" r="4" stroke="#222" strokeWidth="1.8" />
    <path d="M8 17H22V19A7 7 0 0 1 8 19Z" stroke="#222" strokeWidth="1.8" />
  </svg>
);
const ShareIcon = () => (
  <svg width="24" height="24" viewBox="0 0 24 24" fill="none" stroke="#fff" strokeWidth="1.4">
    <path d="M17 14V21H2V8H7" />
    <path d="M13 3L20 9 13 15V11C10 11 7 12 6 16 6 10 9 7 13 7Z" />
  </svg>
);

const BarsSide = ({ c }) => (
  <Ic s={26}>
    <path d="M2 2V23H24" stroke={c} strokeWidth="1.5" />
    <path d="M5 20V13H8V20ZM10 20V5H14V20ZM16 20V10H20V20Z" stroke={c} strokeWidth="1.5" />
  </Ic>
);
const RailTable = () => (
  <Ic s={26}>
    <GridTable x={2} y={2} w={22} h={22} rows={3} cols={3} c="#7a7a78" head="#c9c8c6" />
  </Ic>
);
const RailModel = () => (
  <svg width="30" height="30" viewBox="0 0 30 30" fill="none" stroke="#7a7a78" strokeWidth="1.4">
    <rect x="1" y="9" width="11" height="11" />
    <path d="M1 14H12M17 4H28M17 10H28M17 20H28" />
    <rect x="17" y="1" width="11" height="11" />
    <rect x="17" y="17" width="11" height="11" />
    <path d="M12 14H15V6H17M15 14V22H17" />
  </svg>
);
const RailDax = () => (
  <svg width="28" height="28" viewBox="0 0 28 28" fill="none" stroke="#7a7a78" strokeWidth="1.3">
    <path d="M7 14V3a2 2 0 0 1 2-2H17L23 7V18C23 22 25 22 22 25" />
    <path d="M17 1V7H23" />
    <text x="0" y="25" fontSize="9.5" fontWeight="700" fill="#7a7a78" stroke="none" fontFamily="Roboto">DAX</text>
  </svg>
);

const r = (x, y, w, h, f = BLUE, s = INK) => <rect x={x} y={y} width={w} height={h} fill={f} stroke={s} strokeWidth="1.1" />;
const AXES = <path d="M1.5 1V27H28" stroke={INK} strokeWidth="1.5" fill="none" />;
const AXE2 = <path d="M1 27H28" stroke={INK} strokeWidth="1.5" fill="none" />;
const FRAME = (f = '#fff') => <rect x="1" y="2" width="26" height="25" fill={f} stroke={INK} strokeWidth="1.5" />;
const txt = (x, y, size, c, t, w = 400) => (
  <text x={x} y={y} fontSize={size} fill={c} fontWeight={w} fontFamily="Open Sans, sans-serif" stroke="none">{t}</text>
);

const VIZ_ICONS = [
  <>{AXES}{r(2, 3, 10, 6)}{r(12, 3, 5, 6, '#fff')}{r(2, 10, 6, 6, '#fff')}{r(8, 10, 15, 0, '#fff', 'none')}{r(2, 18, 11, 6, '#fff')}{r(13, 18, 11, 6, GREY)}</>,
  <>{AXES}{r(6, 11, 6, 16, '#fff')}{r(6, 11, 6, 7)}{r(18, 3, 7, 24, '#fff')}{r(18, 3, 7, 11, GREY)}</>,
  <>{AXES}{r(2, 3, 23, 6)}{r(2, 10, 18, 6, GREY)}{r(2, 18, 10, 6, '#fff')}</>,
  <>{AXES}{r(3, 3, 6, 24)}{r(12, 13, 5, 14, '#fff')}{r(20, 7, 6, 20, GREY)}</>,
  <>{AXES}{r(2, 3, 14, 6)}{r(16, 3, 8, 6, '#fff')}{r(2, 17, 14, 6, '#fff')}{r(16, 17, 8, 6, GREY)}</>,
  <>{AXES}{r(6, 3, 7, 24, '#fff')}{r(6, 9, 7, 11)}{r(18, 3, 7, 24, '#fff')}{r(18, 3, 7, 9, GREY)}</>,
  <>{AXES}<path d="M3 20L10 11 15 16 20 7 27 12" stroke={BLUE} strokeWidth="1.4" fill="none" /><path d="M3 26L9 17 16 20 27 4" stroke={INK} strokeWidth="1.2" fill="none" /></>,
  <>{AXE2}<path d="M1 27V17L9 6 14 14 20 3 27 15V27Z" fill={GREY} stroke={INK} strokeWidth="1" /><path d="M1 27V17L11 7 22 27Z" fill={BLUE} stroke={BLUE} /><path d="M4 23L11 14 16 23Z" fill="#fff" /></>,
  <>{AXES}<path d="M2 6L11 16 18 7 27 16V27H2Z" fill="#fff" /><path d="M2 6L11 16 18 7 27 14V21L18 13 11 22 2 13Z" fill={BLUE} stroke={BLUE} /></>,
  <>{r(1, 1, 26, 26, '#fff', '#aaa')}<path d="M2 2H27V14L19 8 11 17 2 10Z" fill={SKY} stroke={SKY} /></>,
  <>{AXES}{r(6, 4, 6, 23)}{r(18, 4, 7, 23, GREY)}<path d="M2 26L10 15 16 22 27 9" stroke={INK} strokeWidth="1.4" fill="none" /></>,
  <>{AXES}{r(5, 17, 6, 10)}{r(13, 4, 6, 23, BLUE)}{r(20, 12, 6, 15, GREY)}<path d="M2 26L10 15 16 22 27 9" stroke={INK} strokeWidth="1.3" fill="none" /></>,
  <>{AXES}<path d="M2 3L14 9 27 3V13L14 15 2 13Z" fill={GREY} /><path d="M2 14C10 10 10 24 16 20 21 16 22 12 27 13" stroke={BLUE} strokeWidth="3" fill="none" /><path d="M2 21H9L12 26H2ZM18 25L22 20H27V26H18Z" fill="#e8821e" /></>,
  <>{AXES}{r(5, 3, 5, 24, '#fff')}{r(12, 14, 5, 13, '#fff')}{r(17, 8, 5, 19, '#fff')}{r(23, 1, 4, 26, '#fff')}</>,
  <><path d="M1 1H27V10H1ZM6 10H22V18H6ZM10 18H18V27H10Z" fill={BLUE} stroke="#1f6fc0" /><path d="M1 6H27" stroke="#1f6fc0" /></>,
  <>{AXES}<rect x="20" y="3" width="5" height="5" fill={INK} /><rect x="5" y="4" width="5" height="5" fill={SKY} /><rect x="12" y="11" width="5" height="5" fill={SKY} /><rect x="6" y="19" width="5" height="5" fill={INK} /><rect x="20" y="17" width="5" height="5" fill={SKY} /></>,
  <><circle cx="14" cy="14" r="13" fill="#fff" stroke={INK} strokeWidth="1.5" /><path d="M14 1A13 13 0 0 1 24 22L14 14Z" fill={SKY} stroke={INK} /></>,
  <><circle cx="14" cy="14" r="11" fill="none" stroke={BLUE} strokeWidth="5" /><path d="M14 1A13 13 0 0 0 3 8L9 11A7 7 0 0 1 14 7Z" fill={GREY} /></>,
  <>{r(1, 1, 14, 26, BLUE, INK)}<path d="M1 12H15" stroke="#fff" /><path d="M15 1H27V27H15ZM15 11H27M21 11V27M15 19H27" fill="#fff" stroke={INK} strokeWidth="1.2" /></>,
  <><circle cx="15" cy="12" r="9" fill="#fff" stroke={INK} strokeWidth="1.5" /><path d="M10 7L16 5 20 10 17 14 12 13ZM14 16L18 15 17 20Z" fill="#3f9a54" /><path d="M7 3C2 8 2 17 8 22M6 27H22M14 23V27" stroke={INK} strokeWidth="1.5" fill="none" /></>,
  <><path d="M1 3L8 1 10 6 26 2 27 14 20 26 15 22 9 27 2 20Z" fill="#fff" stroke={INK} strokeWidth="1.1" /><path d="M1 3L8 1 10 12 4 14ZM18 15L27 14 20 26 17 23Z" fill={BLUE} /><path d="M2 15L12 12 16 20 9 27 2 20Z" fill={GREY} /></>,
  <><path d="M15 0L25 32 15 24 1 30Z" fill="#2f93d6" /><path d="M15 0V24L1 30Z" fill="#6db6e6" /></>,
  <><path d="M1 24A13 13 0 0 1 27 24H22A8 8 0 0 0 6 24Z" fill="#fff" stroke={INK} strokeWidth="1.4" /><path d="M8 11A13 13 0 0 1 27 24H22A8 8 0 0 0 11 16Z" fill={BLUE} /><path d="M11 24L18 15 15 24Z" fill={INK} stroke={INK} strokeWidth="1.6" /></>,
  <>{FRAME()}{txt(3, 20, 15, BLUE, '123')}<path d="M3 24H25" stroke={INK} /></>,
  <>{FRAME()}<path d="M5 8H23V11H5ZM7 13H17V16H7ZM7 18H21V21H7Z" fill="#2b7cc0" /><path d="M5 8V24" stroke={INK} /></>,
  <>{FRAME()}<path d="M5 15L10 7 15 15Z" fill="#3f9a54" /><path d="M15 6H24L19 15Z" fill="#d13438" /><path d="M4 19H24M4 22H24" stroke={INK} /></>,
  <>{FRAME()}<path d="M1 7H27" stroke={INK} strokeWidth="2.5" /><path d="M5 12H10V17H5ZM5 20H10V25H5Z" fill="#9a9998" /><path d="M13 15H29L23 22V30L19 28V22Z" fill="#fff" stroke={INK} strokeWidth="1.3" /></>,
  <><GridTable x={1} y={2} w={26} h={25} rows={3} cols={3} c={INK} head="#d0cfcd" /></>,
  <><GridTable x={1} y={2} w={26} h={25} rows={3} cols={3} c={INK} head="#d0cfcd" /><rect x="2" y="9" width="24" height="5" fill={BLUE} /><rect x="10" y="15" width="8" height="5" fill={BLUE} /><rect x="19" y="15" width="7" height="11" fill={BLUE} /><rect x="2" y="21" width="7" height="5" fill={BLUE} /></>,
  <>{txt(3, 25, 26, '#2b7cc0', 'R', 700)}</>,
  <>{txt(-1, 23, 25, '#2b7cc0', 'Py', 600)}</>,
  <>{AXES}<circle cx="23" cy="5" r="3" fill={BLUE} /><circle cx="17" cy="13" r="2" fill={BLUE} /><circle cx="11" cy="20" r="2" fill="#888" /><path d="M2 6H20M2 13H15M2 20H9" stroke={INK} /></>,
  <><rect x="1" y="11" width="9" height="6" fill={SKY} stroke="#1f6fc0" /><rect x="17" y="1" width="10" height="7" fill={SKY} stroke="#1f6fc0" /><rect x="17" y="11" width="10" height="6" fill={SKY} stroke="#1f6fc0" /><rect x="17" y="20" width="10" height="7" fill={SKY} stroke="#1f6fc0" /><path d="M10 14H17M14 4V24M14 4H17M14 24H17" stroke={INK} /></>,
  <><path d="M1 3H27V21H12L7 27V21H1Z" fill="#fff" stroke="#2b7cc0" strokeWidth="1.6" /></>,
  <><path d="M4 1H17L24 8V27H4Z" fill="#fff" stroke={INK} strokeWidth="1.4" /><path d="M17 1V8H24" stroke={INK} /><circle cx="7" cy="12" r="2" fill={BLUE} /><path d="M11 15H19M7 19H17" stroke={BLUE} strokeWidth="1.5" /></>,
  <><path d="M8 2H20V11A6 6 0 0 1 8 11Z" fill="#fff" stroke={INK} strokeWidth="1.5" /><rect x="8" y="1" width="12" height="4" fill={BLUE} /><path d="M8 5H2C2 12 5 14 8 14M20 5H26C26 12 23 14 20 14M14 17V22M8 27V24H20V27Z" stroke={INK} strokeWidth="1.5" fill="none" /><rect x="7" y="24" width="14" height="3" fill={BLUE} /></>,
  <><path d="M3 1H16L23 8V27H3Z" fill="#fff" stroke={INK} strokeWidth="1.5" /><path d="M16 1V8H23" stroke={INK} /><path d="M7 18H10V24H7ZM12 20H15V24H12ZM17 14H20V24H17Z" fill={INK} /></>,
  <>{r(3, 6, 24, 20, '#fff')}{txt(6, 22, 14, BLUE, '123')}<path d="M8 0H14L11 7H15L5 18 7 10H2Z" fill="#f2b035" stroke="#d2691e" /></>,
  <>{FRAME()}<path d="M1 7H27" stroke={INK} strokeWidth="2" /><path d="M5 14H10V19H5ZM5 21H10V26H5Z" fill="#9a9998" /><path d="M13 15H29L23 22V30L19 28V22Z" fill="#fff" stroke={INK} strokeWidth="1.3" /><path d="M8 0H14L11 7H15L5 18 7 10H2Z" fill="#f2b035" stroke="#d2691e" /></>,
  <><circle cx="14" cy="14" r="13" fill="#2b7cc0" stroke="#bbb" strokeWidth="1.8" /><path d="M4 7L13 5 16 10 9 13ZM17 14L26 12 25 21 18 20ZM7 19L15 19 12 26Z" fill="#3f9a54" /></>,
  <><path d="M14 1L27 14 14 27 1 14Z" fill="#fff" stroke="#7c2f9e" strokeWidth="1.5" /><path d="M7 7L21 21M7 21L14 14M14 14L21 7" stroke="#7c2f9e" strokeWidth="1.5" /></>,
  <><path d="M1 2H15L27 14 15 26H1L13 14Z" fill="#fff" stroke="#2b88d8" strokeWidth="1.7" /><path d="M13 14H21L15 26M7 2L13 14" stroke="#2b88d8" strokeWidth="1.5" /></>,
];

const VizSlot = ({ children }) => (
  <svg width="28" height="30" viewBox="0 0 28 30" fill="none" overflow="visible">
    {children}
  </svg>
);

const Chrome = ({ badge }) => (
  <svg width="42" height="52" viewBox="0 0 42 52" fill="none">
    <circle cx="18" cy="20" r="18" fill="#e34234" />
    <path d="M18 20L35 14A18 18 0 0 1 24 37Z" fill="#fbbc04" />
    <path d="M18 20L24 37A18 18 0 0 1 1 13Z" fill="#34a853" />
    <circle cx="18" cy="20" r="8" fill="#fff" />
    <circle cx="18" cy="20" r="6" fill="#4285f4" />
    {badge}
  </svg>
);

/* ---------- data ---------- */

const RIBBON_GROUPS = [
  {
    name: 'Data', w: 550, pl: 6,
    items: [
      [GetDataIcon, 73, 'Get', 'data', true],
      [ExcelIcon, 74, 'Excel', 'workbook'],
      [OneLakeIcon, 102, 'OneLake', 'data hub', true],
      [SqlIcon, 54, 'SQL', 'Server'],
      [EnterIcon, 64, 'Enter', 'data'],
      [DataverseIcon, 80, 'Dataverse', ''],
      [RecentIcon, 86, 'Recent', 'sources', true],
    ],
  },
  {
    name: 'Queries', w: 174, pl: 11,
    items: [
      [TransformIcon, 88, 'Transform', 'data', true],
      [RefreshIcon, 60, 'Refresh', ''],
    ],
  },
  {
    name: 'Insert', w: 219, pl: 12,
    items: [
      [NewVisualIcon, 60, 'New', 'visual'],
      [TextBoxIcon, 60, 'Text', 'box'],
      [MoreVisualsIcon, 70, 'More', 'visuals', true],
    ],
  },
  {
    name: 'Calculations', w: 170, pl: 13,
    items: [
      [NewMeasureIcon, 72, 'New', 'measure'],
      [QuickMeasureIcon, 72, 'Quick', 'measure'],
    ],
  },
];

const SMALL_GROUPS = [
  ['Share', 89, PublishIcon, 'Publish'],
  ['Copilot', 87, CopilotIcon, 'Copilot'],
];

const TABLE_ROWS = [
  ['Businessman', '17,387,832.31', '2539390', '186959919'],
  ['White-collar', '10,114,655.93', '1441074', '103930055'],
  ['Govt', '8,111,701.37', '1160016', '88773989'],
  ['Selfemployeed', '8,261,757.81', '1119742', '75313288'],
  ['Blue-collar', '6,904,278.57', '952801', '72262158'],
  ['Retirees', '4,535,184.24', '630359', '48675030'],
];

const KPIS = [
  ['Revenue', '55.32M', 120],
  ['Total Interest', '7.84M', 135],
  ['CSS', '3.19', 120],
  ['Income', '575.91M', 120],
];

const GREEN_LINE = [[190,540],[215,537],[238,460],[262,433],[286,475],[310,458],[334,520],[358,495],[380,408],[404,545],[428,553],[452,530],[476,517],[498,487],[522,505],[546,506],[570,502],[594,510],[618,505],[640,495],[664,373],[688,500],[712,537],[736,447],[760,452],[784,464],[808,447],[830,425],[854,515],[878,518],[900,455],[924,510],[948,500],[972,532],[996,523],[1018,478],[1042,452],[1066,438],[1090,548],[1114,535],[1138,520],[1162,518],[1186,548],[1208,480],[1232,495],[1256,475],[1280,550],[1304,518],[1328,545],[1352,490],[1374,478],[1398,512]];
const GOLD_LINE = [[190,535],[215,527],[238,540],[262,615],[286,578],[310,558],[334,515],[358,555],[380,627],[404,550],[428,458],[452,498],[476,590],[498,605],[522,553],[546,535],[570,607],[594,542],[618,560],[640,577],[664,627],[688,578],[712,515],[736,583],[760,570],[784,565],[808,495],[830,573],[854,555],[878,552],[900,523],[924,577],[948,548],[972,508],[996,494],[1018,567],[1042,580],[1066,581],[1090,550],[1114,560],[1138,587],[1162,525],[1186,588],[1208,575],[1232,540],[1256,570],[1280,515],[1304,570],[1328,562],[1352,587],[1374,570],[1398,628]];

const toPath = (pts) =>
  pts.map(([x, y], i) => `${i ? 'L' : 'M'}${(x / 2.613 - 4).toFixed(1)} ${(y / 3 - 108).toFixed(1)}`).join('');

const MONTHS = [['Jan 2023', 69], ['Mar 2023', 146], ['May 2023', 225], ['Jul 2023', 303], ['Sep 2023', 384], ['Nov 2023', 463]];
const Y_TICKS = [['0.8M', 10], ['0.6M', 53], ['0.4M', 95], ['0.2M', 138]];

const CHARTS = {
  income: {
    title: 'Revenue by Income Type', w: 264, h: 162, top: 24, gap: 8.5, rowH: 26, cat: 42, pad: 8,
    rows: [
      ['High', 44, 131, '7M', '22M', '29.23M', 0],
      ['Med', 49, 46, '8M', '8M', '15.85M', 8],
      ['Low', 59, 2, '10M', '', '10.23M', 9],
    ],
  },
  age: {
    title: 'Revenue by Age Group', w: 234, h: 386, mt: 5, top: 35, gap: 14, rowH: 48, cat: 47, pad: 8,
    rows: [
      ['20-30', 2, 5, '', '', '1.05M', 8],
      ['30-40', 23, 31, '4M', '5M', '9.58M', 8],
      ['40-50', 61, 75, '11M', '14M', '24.28M', 5],
      ['50-60', 49, 53, '9M', '10M', '18.19M', 9],
      ['60+', 6, 7, '', '', '2.21M', 8],
    ],
  },
  marital: {
    title: 'Revenue by Marital Status', w: 242, h: 133, top: 21, gap: 6, rowH: 20, cat: 69, pad: 9,
    rows: [
      ['Married', 58, 70, '13M', '15M', '27.97M', 1],
      ['Single', 50, 57, '11M', '12M', '23.26M', 8],
      ['Unknown', 8, 10, '', '', '4.09M', 8],
    ],
  },
  states: {
    title: 'Top 5 States', w: 243, h: 242, top: 25, gap: 8.25, rowH: 28, cat: 32, pad: 9,
    rows: [
      ['TX', 78, 83, '6M', '7M', '12.81M', 4],
      ['NY', 71, 89, '6M', '7M', '12.73M', 5],
      ['CA', 82, 77, '7M', '6M', '12.62M', 6],
      ['FL', 49, 73, '4M', '6M', '9.69M', 8],
      ['NJ', 19, 35, '2M', '3M', '4.25M', 7],
    ],
  },
  dependent: {
    title: 'Revenue by Dependent', w: 307, h: 203, mt: 10, top: 10, gap: 5, rowH: 22, cat: 22, pad: 9, soft: true,
    rows: [
      ['', 16, 19, '', '1M', '2.33M', 8],
      ['4', 58, 72, '4M', '5M', '8.74M', 7, true],
      ['', 98, 129, '7M', '9M', '15.28M', 8],
      ['2', 105, 121, '7M', '8M', '15.20M', 8, true],
      ['', 67, 76, '4M', '5M', '9.62M', 8],
      ['0', 31, 31, '2M', '2M', '4.14M', 8, true],
    ],
  },
  expenditure: {
    title: 'Revenue by Expenditure Type', w: 374, h: 207, mt: 7, top: 20, gap: 5.8, rowH: 20, cat: 94, pad: 9,
    rows: [
      ['Graduate', 100, 127, '10M', '12M', '22.30M', 6],
      ['High School', 51, 62, '5M', '6M', '11.12M', 9],
      ['Unknown', 41, 45, '4M', '4M', '8.48M', 8],
      ['Uneducated', 37, 46, '4M', '4M', '8.19M', 8],
      ['Post-Graduate', 12, 16, '', '', '2.79M', 8],
      ['Doctorate', 11, 13, '', '', '2.42M', 8],
    ],
  },
};

/* ---------- parts ---------- */

const BarChart = ({ chart }) => (
  <Card $w={chart.w} $h={chart.h} $mt={chart.mt}>
    <ChartTitle>{chart.title}</ChartTitle>
    <BarList $top={chart.top} $gap={chart.gap}>
      {chart.rows.map(([cat, gold, green, a, b, total, off, dots], i) => (
        <BarRow key={i} $h={chart.rowH}>
          <BarCat $w={chart.cat} $pad={chart.pad} $soft={chart.soft}>{cat}</BarCat>
          <Seg $c={GOLD} style={{ width: gold }}>{a}</Seg>
          <Seg $c={DARK} style={{ width: green }}>{b}</Seg>
          <BarTotal style={{ marginLeft: off }}>{total}</BarTotal>
          {dots && <BarDots />}
        </BarRow>
      ))}
    </BarList>
  </Card>
);

const RevenueByWeek = () => (
  <Card $w={564} $h={190}>
    <ChartTitle>Revenue by Week</ChartTitle>
    <svg width="562" height="166" viewBox="0 0 562 166" fill="none">
      {Y_TICKS.map(([label, y]) => (
        <g key={label}>
          <path d={`M69 ${y}H539`} stroke="#d2d2d2" strokeDasharray="1 4" />
          <text x="50" y={y + 4} textAnchor="end" fontSize="12" fontWeight="500" fill="#222" fontFamily="Roboto">{label}</text>
        </g>
      ))}
      {MONTHS.map(([label, x]) => (
        <g key={label}>
          <path d={`M${x} 10V138`} stroke="#d2d2d2" strokeDasharray="1 4" />
          <text x={x} y="154" textAnchor="middle" fontSize="12" fontWeight="500" fill="#222" fontFamily="Roboto">{label}</text>
        </g>
      ))}
      <text transform="translate(13 74) rotate(-90)" textAnchor="middle" fontSize="10" fill="#444" fontFamily="Roboto">Sum of Revenue</text>
      <path d={toPath(GOLD_LINE)} stroke={GOLD} strokeWidth="2.4" strokeLinejoin="round" />
      <path d={toPath(GREEN_LINE)} stroke={DARK} strokeWidth="2.6" strokeLinejoin="round" />
    </svg>
  </Card>
);

const RibbonButton = ({ Icon, w, a, b, more, off }) => (
  <RibbonBtn $w={w} $off={off}>
    <BtnIcon><Icon /></BtnIcon>
    <div>{a}</div>
    <div>{b}{more && <Chevron />}</div>
  </RibbonBtn>
);

const ChevRight = ({ dbl, flip, c = '#252423' }) => (
  <svg width={dbl ? 18 : 10} height="20" viewBox={dbl ? '0 0 18 20' : '0 0 10 20'} fill="none" stroke={c} strokeWidth="1.5" style={{ transform: flip ? 'scaleX(-1)' : 'none' }}>
    <path d="M2 2L9 10 2 18" />
    {dbl && <path d="M9 2L16 10 9 18" />}
  </svg>
);

const FieldTableIcon = () => (
  <svg width="18" height="18" viewBox="0 0 18 18" fill="none" stroke="#484644" strokeWidth="1.3">
    <rect x="1" y="1" width="16" height="16" rx="2" />
    <path d="M1 6H17M1 12H17M6 1V17M12 1V17" />
  </svg>
);

const App = () => (
  <>
    <GlobalStyle />
    <Page>
      <TitleBar>
        <BarIcons><SaveIcon /><UndoIcon /><UndoIcon dim flip /></BarIcons>
        <DocTitle>{'Credit_Card_Report  •  Last saved: Today at 11:26 PM'}</DocTitle>
        <Caret />
        <TopSearch><Magnifier />Search</TopSearch>
        <SignIn>Sign in</SignIn>
        <Avatar />
        <WinControls>
          <svg width="18" height="18" viewBox="0 0 18 18" stroke="#fff" strokeWidth="1.4"><path d="M0 9H18" /></svg>
          <svg width="16" height="18" viewBox="0 0 16 18" fill="none" stroke="#fff" strokeWidth="1.4"><rect x="1" y="1" width="14" height="16" rx="2" /></svg>
          <svg width="18" height="18" viewBox="0 0 18 18" stroke="#fff" strokeWidth="1.4"><path d="M1 1L17 17M17 1L1 17" /></svg>
        </WinControls>
      </TitleBar>

      <MenuBar>
        <MenuItem $mr={7.5}>File</MenuItem>
        <MenuItem $on>Home</MenuItem>
        <MenuItem>Insert</MenuItem>
        <MenuItem>Modeling</MenuItem>
        <MenuItem>View</MenuItem>
        <MenuItem>Optimize</MenuItem>
        <MenuItem>Help</MenuItem>
        <ShareButton><ShareIcon />Share<Chevron c="#fff" s={12} /></ShareButton>
      </MenuBar>

      <Ribbon>
        <RibbonGroup $w={239}>
          <GroupBody>
            <RibbonBtn $w={78} $pl={6} $off>
              <BtnIcon><PasteIcon /></BtnIcon>
              <div>Paste</div>
            </RibbonBtn>
            <SmallCol>
              <SmallBtn><CutIcon />&nbsp;Cut</SmallBtn>
              <SmallBtn><CopyIcon />Copy</SmallBtn>
              <SmallBtn><PainterIcon />Format painter</SmallBtn>
            </SmallCol>
          </GroupBody>
          <GroupName>Clipboard</GroupName>
        </RibbonGroup>
        {RIBBON_GROUPS.map((g) => (
          <RibbonGroup key={g.name} $w={g.w}>
            <GroupBody $pl={g.pl}>
              {g.items.map(([Icon, w, a, b, more]) => (
                <RibbonButton key={a + b} Icon={Icon} w={w} a={a} b={b} more={more} />
              ))}
            </GroupBody>
            <GroupName>{g.name}</GroupName>
          </RibbonGroup>
        ))}
        <RibbonGroup $w={110}>
          <GroupBody>
            <RibbonButton Icon={SensitivityIcon} w={109} a="Sensitivity" b="" more off />
          </GroupBody>
          <GroupName>Sensitivity</GroupName>
        </RibbonGroup>
        {SMALL_GROUPS.map(([name, w, Icon, label]) => (
          <RibbonGroup key={name} $w={w}>
            <GroupBody>
              <RibbonButton Icon={Icon} w={w - 1} a={label} b="" />
            </GroupBody>
            <GroupName>{name}</GroupName>
          </RibbonGroup>
        ))}
        <Collapse>
          <svg width="14" height="10" viewBox="0 0 14 10" fill="none" stroke="#333" strokeWidth="2"><path d="M1 8L7 2 13 8" /></svg>
        </Collapse>
      </Ribbon>

      <Main>
        <Workspace>
          <CanvasRow>
            <Rail>
              <RailMark />
              <RailSlot><BarsSide c="#222" /></RailSlot>
              <RailSlot><RailTable /></RailSlot>
              <RailSlot><RailModel /></RailSlot>
              <RailSlot><RailDax /></RailSlot>
            </Rail>
            <Canvas>
              <HeadArea>
                <ReportTitle>Credit  Card  Customer  Report</ReportTitle>
                <FiltersRow>
                  <FiltersCol>
                    <Slicer $w={257} $h={66} $ml={2}>
                      <SlicerHead>
                        Week_Start_Date
                        <svg width="16" height="10" viewBox="0 0 16 10" fill="none" stroke="#555" strokeWidth="1.2"><path d="M1 1L8 9 15 1" /></svg>
                      </SlicerHead>
                      <SlicerDrop>
                        All
                        <svg width="16" height="10" viewBox="0 0 16 10" fill="none" stroke="#fff" strokeWidth="1.2"><path d="M1 1L8 9 15 1" /></svg>
                      </SlicerDrop>
                    </Slicer>
                    <FramePanel $w={257} $h={57} $ml={1} $pad="6px 5px 4px 5px">
                      <Tile $w={81} $h={47} $c={DARK}>Swipe<TileValue>739.89M</TileValue></Tile>
                      <Tile $w={81} $h={47} $c={MID}>Online<TileValue>737.14M</TileValue></Tile>
                      <Tile $w={81} $h={47} $c={KHAKI}>Chip<TileValue>736.88M</TileValue></Tile>
                    </FramePanel>
                  </FiltersCol>
                  <FramePanel $w={157} $h={133} $pad="6px 4px 4px 6px">
                    <TileCol>
                      <Tile $w={75} $h={63} $c={DARK}>Q4<TileValue>796.68M</TileValue></Tile>
                      <Tile $w={75} $h={59} $c={MID}>Q3<TileValue>734.04M</TileValue></Tile>
                    </TileCol>
                    <TileCol>
                      <Tile $w={71} $h={60} $c="#bea94f" $pb={3}>Q2<TileValue>715.38M</TileValue></Tile>
                      <Tile $w={71} $h={62} $c={KHAKI}>Q1<TileValue>710.63M</TileValue></Tile>
                    </TileCol>
                  </FramePanel>
                </FiltersRow>
                <Table $w={422} $h={252}>
                  <TableGrid $h={53} $head $line="2px solid #7fb0e8">
                    <HeadCell $pl={5}>Customer_Job</HeadCell>
                    <HeadCell $pl={4}>Revenue</HeadCell>
                    <HeadCell $pl={6}>Interest<br />Earned</HeadCell>
                    <HeadCell $pl={6}>Income<SortMark /></HeadCell>
                  </TableGrid>
                  {TABLE_ROWS.map((row, i) => (
                    <TableGrid key={row[0]} $h={27} $line={i < 5 ? '2px solid #eeeeee' : '2px solid #7fb0e8'}>
                      <NameCell>{row[0]}</NameCell>
                      <NumCell>{row[1]}</NumCell>
                      <NumCell>{row[2]}</NumCell>
                      <NumCell>{row[3]}</NumCell>
                    </TableGrid>
                  ))}
                  <TableGrid $h={30} $strong>
                    <NameCell>Total</NameCell>
                    <NumCell>55,315,410.23</NumCell>
                    <NumCell>7843382</NumCell>
                    <NumCell>575914439</NumCell>
                  </TableGrid>
                </Table>
              </HeadArea>

              <TopArea>
                <KpiRow>
                  <FramePanel $w={176} $h={58} $pad="6px 5px 4px 5px">
                    <Tile $w={90} $h={48} $c={DARK}>M<LargeValue>30M</LargeValue></Tile>
                    <Tile $w={75} $h={48} $c={GOLD}>F<LargeValue>25M</LargeValue></Tile>
                  </FramePanel>
                  {KPIS.map(([name, value, w]) => (
                    <Kpi key={name} $w={w} $h={56}>
                      <KpiName>{name}</KpiName>
                      <KpiValue>{value}</KpiValue>
                    </Kpi>
                  ))}
                </KpiRow>
                <ChartsRow>
                  <FramePanel $w={191} $h={192} $mt={2} $pad="6px 5px 5px 6px">
                    <TileCol>
                      <TileLine>
                        <Tile $w={59} $h={135} $c={DARK} $pb={0}>Silver<TileValue>740.41M</TileValue></Tile>
                        <Tile $w={60} $h={135} $c={MID} $pb={0}>Blue<TileValue>738.99M</TileValue></Tile>
                        <Tile $w={59} $h={135} $c="#bea94f" $pb={0}>Gold<TileValue>738.42M</TileValue></Tile>
                      </TileLine>
                      <Tile $w={180} $h={45} $c={KHAKI} $pb={1}>Platinum<TileValue>729.88M</TileValue></Tile>
                    </TileCol>
                  </FramePanel>
                  <RevenueByWeek />
                </ChartsRow>
              </TopArea>

              <IncomeArea><BarChart chart={CHARTS.income} /></IncomeArea>

              <LowArea>
                <BarChart chart={CHARTS.dependent} />
                <BarChart chart={CHARTS.expenditure} />
              </LowArea>

              <SideArea>
                <BarChart chart={CHARTS.age} />
                <SideCol>
                  <BarChart chart={CHARTS.marital} />
                  <BarChart chart={CHARTS.states} />
                </SideCol>
              </SideArea>
            </Canvas>
          </CanvasRow>
          <TabBar>
            <TabTools>
              <ToolSlot $w={65}>
                <svg width="30" height="26" viewBox="0 0 30 26" fill="none" stroke="#484644" strokeWidth="1.5"><rect x="1" y="1" width="28" height="19" /><path d="M15 20V25M9 25H21" /></svg>
              </ToolSlot>
              <ToolSlot $w={70}>
                <svg width="20" height="32" viewBox="0 0 20 32" fill="none" stroke="#484644" strokeWidth="1.5"><rect x="1" y="1" width="18" height="30" rx="2" /><path d="M9 26H11" /></svg>
              </ToolSlot>
              <ToolSlot $w={20}>
                <svg width="8" height="16" viewBox="0 0 8 16"><path d="M8 0V16L0 8Z" fill="#c8c6c4" /></svg>
              </ToolSlot>
              <ToolSlot $w={46}>
                <svg width="8" height="16" viewBox="0 0 8 16"><path d="M0 0V16L8 8Z" fill="#c8c6c4" /></svg>
              </ToolSlot>
              <ToolMark />
            </TabTools>
            <Tab $w={167} $on>CC Customer<TabClose>x</TabClose></Tab>
            <Tab $w={177}>CC Transaction</Tab>
            <Tab $w={114}>Page 1</Tab>
            <AddTab>+</AddTab>
          </TabBar>
        </Workspace>

        <FilterPane>
          <ChevRight dbl flip />
          <svg width="20" height="20" viewBox="0 0 20 20" fill="none" stroke="#252423" strokeWidth="1.5" style={{ marginTop: 22 }}>
            <path d="M18 1V19L13 14V8L1 5Z" />
          </svg>
          <FilterLabel>Filters</FilterLabel>
        </FilterPane>

        <VizPane>
          <PaneHead>Visualizations<ChevRight dbl /></PaneHead>
          <BuildLabel>Build visual</BuildLabel>
          <BuildTabs>
            <BuildTile $on>
              <svg width="36" height="40" viewBox="0 0 36 40" fill="none">
                <path d="M6 2H26" stroke="#333" />
                <rect x="2" y="9" width="33" height="12" fill={TEAL} stroke="#333" strokeDasharray="2 1.5" />
                <rect x="2" y="26" width="33" height="12" fill={TEAL} stroke="#333" strokeDasharray="2 1.5" />
              </svg>
            </BuildTile>
            <BuildTile>
              <svg width="38" height="38" viewBox="0 0 38 38" fill="none" stroke="#333" strokeWidth="1.4">
                <path d="M14 36H3V2H17L27 12V18M17 2V12H27" />
                <path d="M36 14L22 27C18 27 16 30 15 36 20 36 26 34 26 30Z" fill="#f3f2f1" />
              </svg>
            </BuildTile>
          </BuildTabs>
          <Notch viewBox="0 0 269 20" fill="none" stroke="#8a8886" strokeWidth="1.2">
            <path d="M0 19.5H23L36 9 49 19.5H269" />
          </Notch>
          <VizGrid>
            {VIZ_ICONS.map((icon, i) => (
              <VizSlot key={i}>{icon}</VizSlot>
            ))}
            <VizDots>...</VizDots>
          </VizGrid>
          <WellArea>
            <WellLabel>Values</WellLabel>
            <DropWell>Add data fields here</DropWell>
            <WellLabel $b $mt={17}>Drill through</WellLabel>
            <ToggleRow $mt={13}>Cross-report<Toggle><Knob />Off</Toggle></ToggleRow>
            <ToggleRow $mt={16}>Keep all filters<Toggle $on>On<Knob $on /></Toggle></ToggleRow>
            <DropWell $mt={16} $h={6} $cut />
          </WellArea>
          <ScrollThumb />
        </VizPane>

        <DataPane>
          <PaneHead>Data<ChevRight dbl /></PaneHead>
          <DataSearch><Magnifier s={22} c="#605e5c" />Search</DataSearch>
          <FieldList>
            <FieldRow><ChevRight c="#605e5c" /><FieldTableIcon />customer</FieldRow>
            <FieldRow><ChevRight c="#605e5c" /><FieldTableIcon />Processed_Credit_Car...</FieldRow>
          </FieldList>
        </DataPane>
      </Main>

      <StatusBar>
        Page 1 of 3
        <ZoomGroup>
          -
          <ZoomTrack><ZoomThumb $x={42} $tall /><ZoomThumb $x={73} /></ZoomTrack>
          +
          <PercentText>64%</PercentText>
          <FitIcon width="24" height="22" viewBox="0 0 24 22" fill="none" stroke="#605e5c" strokeWidth="1.3">
            <rect x="1" y="1" width="22" height="20" />
            <path d="M4 8V4H8M16 4H20V8M20 14V18H16M8 18H4V14" />
          </FitIcon>
          <UpdateText>Update available (click to download)</UpdateText>
        </ZoomGroup>
      </StatusBar>

      <Taskbar>
        <StartSlot>
          <svg width="24" height="24" viewBox="0 0 24 24"><path d="M0 3.5L10.5 2V11.5H0ZM12 1.8L24 0V11.5H12ZM0 13H10.5V22.3L0 20.8ZM12 13H24V24L12 22.2Z" fill="#000" /></svg>
        </StartSlot>
        <TaskSearch>
          <Magnifier s={24} c="#222" />
          Type here to search
          <SearchArt>
            <svg width="118" height="56" viewBox="0 0 118 56" fill="none">
              <path d="M0 56L13 42H100L118 56Z" fill="#d9b38c" />
              <path d="M18 12L36 6 54 14 50 44 36 40 22 44Z" fill="#f4f1e0" stroke="#6fa84f" strokeWidth="2" />
              <path d="M36 6V40" stroke="#999" />
              <path d="M42 28L58 6 62 9 46 31Z" fill="#f2a33a" />
              <path d="M72 40C70 20 72 8 84 2 96 8 98 20 96 50 90 54 76 54 72 50Z" fill="#2f7fd3" />
              <path d="M76 38C78 28 92 28 94 38V48H76Z" fill="#5aa5ea" />
              <path d="M80 2H88V8H80Z" fill="#1b5fa8" />
            </svg>
          </SearchArt>
        </TaskSearch>
        <TaskIcons>
          <TaskSlot $w={60}>
            <svg width="26" height="30" viewBox="0 0 26 30" fill="none" stroke="#222" strokeWidth="1.5">
              <path d="M1 5H14M1 25H14M3 9H21V21H3M22 1V3M22 27V29" />
              <rect x="20" y="12" width="4" height="4" fill="#222" />
            </svg>
          </TaskSlot>
          <TaskSlot $w={61} $ml={17} $run>
            <Chrome badge={<><circle cx="29" cy="35" r="13" fill="#0f4f8f" /><text x="29" y="40" fill="#fff" fontSize="13" fontWeight="700" textAnchor="middle" fontFamily="Roboto">Y</text></>} />
          </TaskSlot>
          <TaskSlot $w={61} $ml={14} $run>
            <Chrome badge={<><circle cx="29" cy="35" r="13" fill="#b88c5a" /><path d="M24 30H34L29 42Z" fill="#4a3a2a" /></>} />
          </TaskSlot>
          <TaskSlot $w={60} $ml={14} $run>
            <svg width="32" height="46" viewBox="0 0 32 46" fill="none">
              <rect x="1" y="1" width="30" height="44" rx="3" fill="#dbe9f7" stroke="#8ab2d8" />
              <rect x="1" y="1" width="30" height="7" fill="#4a88c7" />
              <text x="4" y="26" fontSize="18" fontWeight="700" fill="#e07b28" fontFamily="Liberation Serif">A</text>
              <path d="M18 16H28M18 20H28M18 24H28M5 32H28M5 36H24" stroke="#7aa4cf" />
            </svg>
          </TaskSlot>
          <TaskSlot $w={74} $ml={8} $hot $run>
            <svg width="28" height="38" viewBox="0 0 28 38" fill="none">
              <rect x="0" y="18" width="12" height="20" rx="1" fill="#f5e06a" />
              <rect x="8" y="9" width="12" height="29" rx="1" fill="#f2c92f" />
              <rect x="16" y="0" width="12" height="38" rx="1" fill="#d9a416" />
            </svg>
          </TaskSlot>
        </TaskIcons>
        <TrayScroll>
          <svg width="14" height="8" viewBox="0 0 14 8" fill="none" stroke="#333" strokeWidth="2"><path d="M1 7L7 1 13 7" /></svg>
          <svg width="14" height="8" viewBox="0 0 14 8" fill="none" stroke="#333" strokeWidth="2"><path d="M1 1L7 7 13 1" /></svg>
        </TrayScroll>
        <Tray>
          <svg width="36" height="36" viewBox="0 0 36 36" fill="none">
            <path d="M3 24C4 34 20 38 29 26 32 21 32 16 30 11 28 20 14 26 3 24Z" fill="#f59a23" />
            <path d="M1 13C1 9 5 8 7 9 8 3 17 3 18 9 21 9 23 11 22 15H2Z" fill="#cfe0f4" />
            <circle cx="26" cy="8" r="8" fill="#c8211a" />
            <text x="26" y="12" fill="#fff" fontSize="11" textAnchor="middle" fontFamily="Roboto">1</text>
          </svg>
          <Temp>77°F</Temp>
          <TrayIcon $w={30}><svg width="20" height="12" viewBox="0 0 20 12" fill="none" stroke="#222" strokeWidth="1.4"><path d="M1 11L10 2 19 11" /></svg></TrayIcon>
          <TrayIcon $w={66}><svg width="24" height="24" viewBox="0 0 24 24" fill="none"><circle cx="12" cy="12" r="10" stroke="#222" strokeWidth="2" /><circle cx="12" cy="12" r="5" fill="#222" /></svg></TrayIcon>
          <TrayIcon $w={30}><svg width="24" height="14" viewBox="0 0 24 14"><rect x="0.7" y="0.7" width="21" height="12.6" fill="#111" stroke="#555" /><rect x="22" y="5" width="2" height="4" fill="#555" /></svg></TrayIcon>
          <TrayIcon $w={68}><svg width="18" height="26" viewBox="0 0 18 26" fill="none" stroke="#444" strokeWidth="1.2"><rect x="1" y="7" width="10" height="12" rx="1" /><path d="M11 12L17 8V18L11 14M3 3C6 1 9 1 12 3M3 23C6 25 9 25 12 23" /></svg></TrayIcon>
          <TrayIcon $w={24}><svg width="24" height="22" viewBox="0 0 24 22" fill="none" stroke="#444" strokeWidth="1.2"><path d="M1 7H5L11 2V20L5 15H1ZM14 8C16 10 16 12 14 14M18 4C21 8 21 14 18 18" /></svg></TrayIcon>
          <ClockBox>11:27 PM<br />7/16/2024</ClockBox>
          <TrayIcon $w={44}><svg width="24" height="24" viewBox="0 0 24 24" fill="none" stroke="#222" strokeWidth="1.3"><path d="M1 1H23V18H15L12 22 9 18H1Z" /></svg></TrayIcon>
          <TrayEnd />
        </Tray>
      </Taskbar>
    </Page>
  </>
);

export default App;
